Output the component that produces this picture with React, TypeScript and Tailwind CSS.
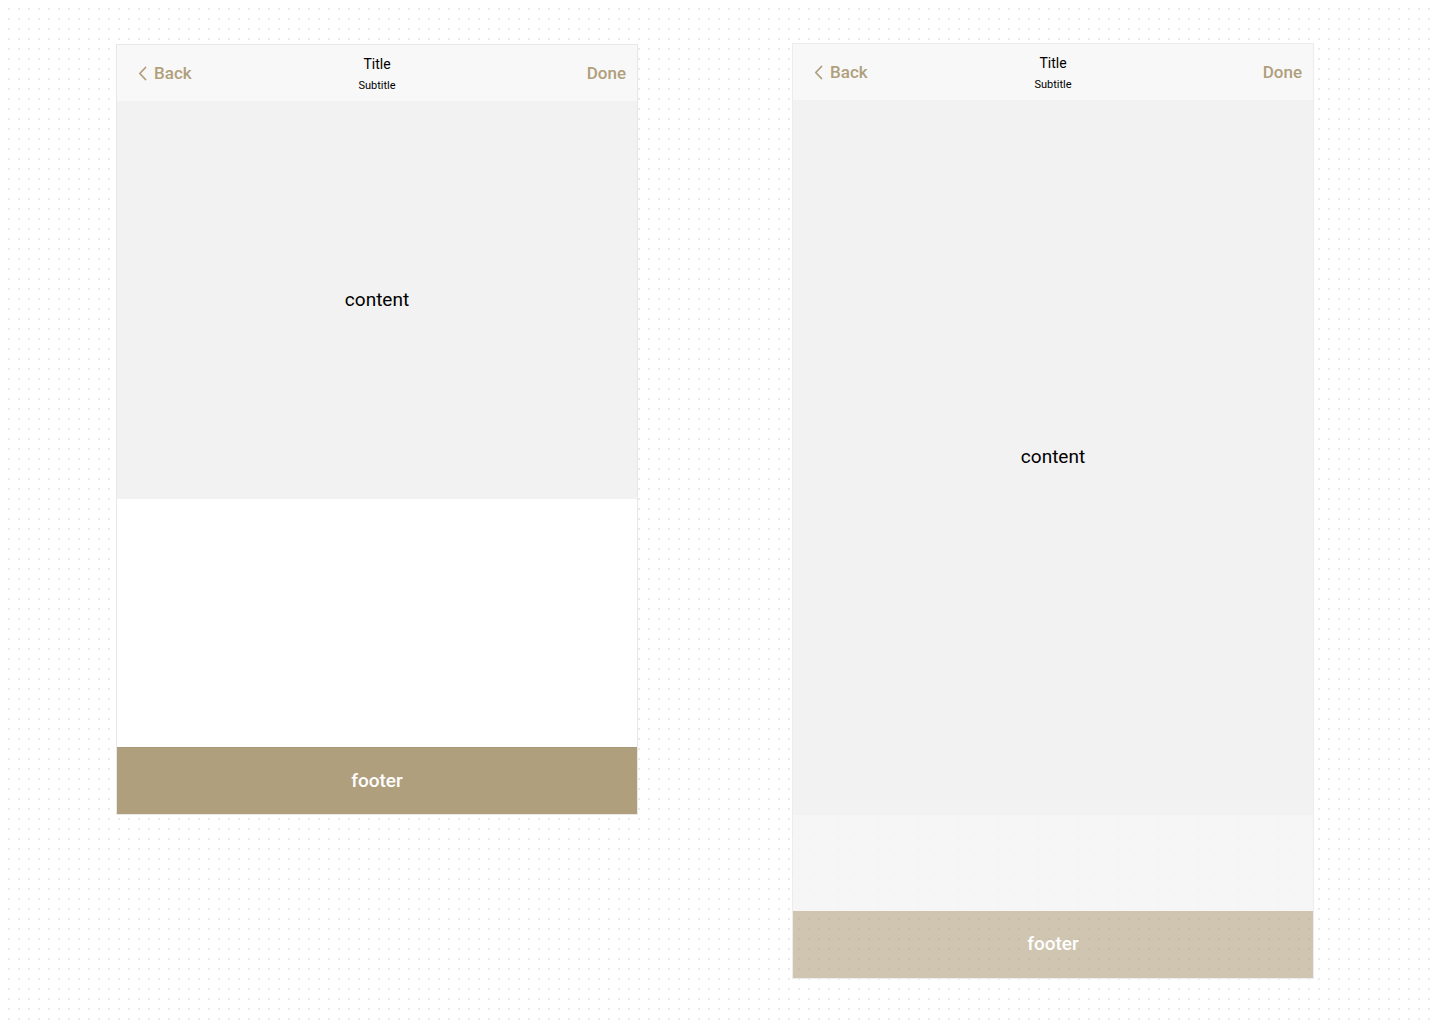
import React from "react";

function Chevron() {
  return (
    <svg width="9" height="15" viewBox="0 0 9 15" fill="none">
      <polyline points="7.5,1.5 1.8,7.5 7.5,13.5" stroke="#b09f7c" strokeWidth="1.8" strokeLinecap="round" strokeLinejoin="round" />
    </svg>
  );
}

function Header() {
  return (
    <div className="relative flex h-[56px] items-center justify-between bg-[#f8f8f8] px-[11px] pt-px">
      <div className="flex items-center gap-[7px] pl-[10px] text-[17px] font-medium text-[#b09f7c]">
        <Chevron />
        <span>Back</span>
      </div>
      <div className="absolute left-1/2 top-[10px] flex -translate-x-1/2 flex-col items-center">
        <span className="text-[14px] leading-[18px] text-black">Title</span>
        <span className="mt-[6px] text-[11px] leading-[13px] text-black">Subtitle</span>
      </div>
      <span className="text-[17px] font-medium text-[#b09f7c]">Done</span>
    </div>
  );
}

export default function App() {
  return (
    <div
      className="min-h-[1022px] w-full bg-white bg-[radial-gradient(circle,#e9e9e9_0.7px,transparent_0.9px)] bg-[size:10px_10px] bg-[position:4px_4px]"
      style={{ fontFamily: "Roboto, 'Liberation Sans', sans-serif" }}
    >
      <div className="flex items-start gap-[154px] pl-[116px] pt-[44px]">
        <div className="flex w-[522px] flex-col border border-[#e8e8e8] bg-white">
          <Header />
          <div className="flex h-[398px] items-center justify-center bg-[#f2f2f2] text-[19px] text-black">content</div>
          <div className="h-[248px] bg-white" />
          <div className="flex h-[67px] items-center justify-center border-t border-[#a99a7a] bg-[#b09f7c] text-[19px] font-medium text-white">
            footer
          </div>
        </div>
        <div className="-mt-px flex w-[522px] flex-col border border-[#ececec]">
          <Header />
          <div className="flex h-[715px] items-center justify-center bg-[#f2f2f2] text-[19px] text-black">content</div>
          <div className="h-[96px] bg-[#f5f5f5]/85" />
          <div className="flex h-[67px] items-center justify-center bg-[#b09f7c]/60 text-[19px] font-medium text-white">
            footer
          </div>
        </div>
      </div>
    </div>
  );
}
